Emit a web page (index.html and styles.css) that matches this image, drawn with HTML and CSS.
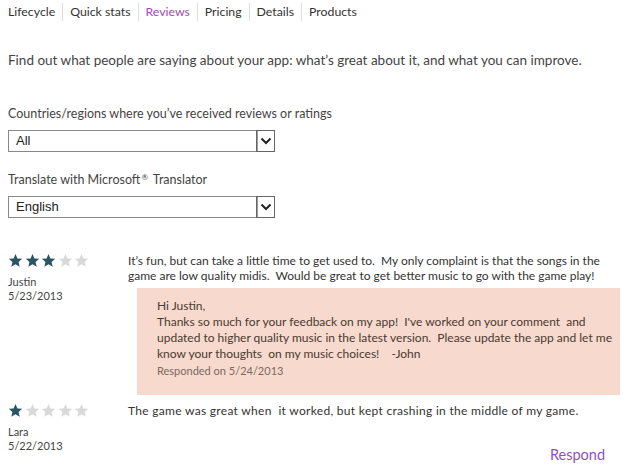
FILE: index.html
```html
<!DOCTYPE html>
<html>
<head>
<meta charset="utf-8">
<link rel="stylesheet" href="styles.css">
</head>
<body>
<nav class="tabs">
  <a class="tab">Lifecycle</a>
  <a class="tab">Quick stats</a>
  <a class="tab active">Reviews</a>
  <a class="tab">Pricing</a>
  <a class="tab">Details</a>
  <a class="tab">Products</a>
</nav>
<p class="intro">Find out what people are saying about your app: what’s great about it, and what you can improve.</p>

<div class="field first">
  <div class="label">Countries/regions where you’ve received reviews or ratings</div>
  <div class="select"><span class="value">All</span><span class="arrow"><svg width="12" height="8" viewBox="0 0 12 8"><path d="M1.5 1.5 L6 6 L10.5 1.5" fill="none" stroke="#222" stroke-width="2"/></svg></span></div>
</div>
<div class="field">
  <div class="label">Translate with Microsoft<sup>®</sup> Translator</div>
  <div class="select"><span class="value">English</span><span class="arrow"><svg width="12" height="8" viewBox="0 0 12 8"><path d="M1.5 1.5 L6 6 L10.5 1.5" fill="none" stroke="#222" stroke-width="2"/></svg></span></div>
</div>

<div class="review r1">
  <div class="meta">
    <div class="stars">
      <svg class="star on" viewBox="0 0 24 24"><path d="M12 1.5l3.1 7.2 7.6.6-5.8 5 1.8 7.5L12 17.8 5.3 21.8l1.8-7.5-5.8-5 7.6-.6z"/></svg>
      <svg class="star on" viewBox="0 0 24 24"><path d="M12 1.5l3.1 7.2 7.6.6-5.8 5 1.8 7.5L12 17.8 5.3 21.8l1.8-7.5-5.8-5 7.6-.6z"/></svg>
      <svg class="star on" viewBox="0 0 24 24"><path d="M12 1.5l3.1 7.2 7.6.6-5.8 5 1.8 7.5L12 17.8 5.3 21.8l1.8-7.5-5.8-5 7.6-.6z"/></svg>
      <svg class="star" viewBox="0 0 24 24"><path d="M12 1.5l3.1 7.2 7.6.6-5.8 5 1.8 7.5L12 17.8 5.3 21.8l1.8-7.5-5.8-5 7.6-.6z"/></svg>
      <svg class="star" viewBox="0 0 24 24"><path d="M12 1.5l3.1 7.2 7.6.6-5.8 5 1.8 7.5L12 17.8 5.3 21.8l1.8-7.5-5.8-5 7.6-.6z"/></svg>
    </div>
    <div class="who">Justin</div>
    <div class="when">5/23/2013</div>
  </div>
  <div class="body">
    <p class="text">It’s fun, but can take a little time to get used to.&nbsp; My only complaint is that the songs in the game are low quality midis.&nbsp; Would be great to get better music to go with the game play!</p>
    <div class="response">
      <p class="resp-text">Hi Justin,<br>Thanks so much for your feedback on my app!&nbsp; I've worked on your comment&nbsp; and updated to higher quality music in the latest version.&nbsp; Please update the app and let me know your thoughts&nbsp; on my music choices!&nbsp;&nbsp;&nbsp; -John</p>
      <p class="resp-date">Responded on 5/24/2013</p>
    </div>
  </div>
</div>

<div class="review r2">
  <div class="meta">
    <div class="stars">
      <svg class="star on" viewBox="0 0 24 24"><path d="M12 1.5l3.1 7.2 7.6.6-5.8 5 1.8 7.5L12 17.8 5.3 21.8l1.8-7.5-5.8-5 7.6-.6z"/></svg>
      <svg class="star" viewBox="0 0 24 24"><path d="M12 1.5l3.1 7.2 7.6.6-5.8 5 1.8 7.5L12 17.8 5.3 21.8l1.8-7.5-5.8-5 7.6-.6z"/></svg>
      <svg class="star" viewBox="0 0 24 24"><path d="M12 1.5l3.1 7.2 7.6.6-5.8 5 1.8 7.5L12 17.8 5.3 21.8l1.8-7.5-5.8-5 7.6-.6z"/></svg>
      <svg class="star" viewBox="0 0 24 24"><path d="M12 1.5l3.1 7.2 7.6.6-5.8 5 1.8 7.5L12 17.8 5.3 21.8l1.8-7.5-5.8-5 7.6-.6z"/></svg>
      <svg class="star" viewBox="0 0 24 24"><path d="M12 1.5l3.1 7.2 7.6.6-5.8 5 1.8 7.5L12 17.8 5.3 21.8l1.8-7.5-5.8-5 7.6-.6z"/></svg>
    </div>
    <div class="who">Lara</div>
    <div class="when">5/22/2013</div>
  </div>
  <div class="body">
    <p class="text wide">The game was great when&nbsp; it worked, but kept crashing in the middle of my game.</p>
    <div class="actions"><a class="respond">Respond</a></div>
  </div>
</div>
</body>
</html>
```

FILE: styles.css
```css
html, body {
  margin: 0;
  padding: 0;
  background: #fff;
}
body {
  padding: 0 8px;
  font-family: Lato, "Open Sans", sans-serif;
  color: #333;
  width: 613px;
}
p { margin: 0; }

.tabs {
  display: flex;
  align-items: center;
  height: 24px;
  font-size: 12.3px;
  color: #333;
}
.tab {
  padding: 0 7px;
  line-height: 18px;
  border-left: 1px solid #ddd;
}
.tab:first-child { padding-left: 0; border-left: none; }
.tab.active { color: #a04db0; }

.intro {
  margin-top: 27px;
  font-size: 13.5px;
  line-height: 18px;
  color: #444;
}

.field { margin-top: 17px; }
.field.first { margin-top: 37px; }
.label {
  font-size: 12.5px;
  line-height: 16px;
  color: #444;
}
.label sup { font-size: 8px; vertical-align: 4px; margin-left: 1px; margin-right: 2px; }
.select {
  margin-top: 8px;
  width: 265px;
  height: 20px;
  border: 1px solid #888;
  display: flex;
  align-items: stretch;
  font-family: "Liberation Sans", Arial, sans-serif;
  font-size: 13px;
  color: #222;
}
.select .value {
  flex: 1;
  padding-left: 7px;
  line-height: 20px;
}
.select .arrow {
  width: 16px;
  border-left: 1px solid #999;
  outline: 1px solid #666;
  display: flex;
  align-items: center;
  justify-content: center;
  background: #fff;
}

.review {
  display: flex;
  font-size: 12px;
  color: #333;
}
.r1 { margin-top: 34px; }
.r2 { margin-top: 7px; }
.meta { width: 120px; flex: none; }
.stars { display: flex; gap: 1.5px; height: 16px; align-items: center; }
.star { width: 15px; height: 15px; fill: #d9d9d9; }
.star.on { fill: #2b5466; }
.who, .when { font-size: 11px; line-height: 14px; color: #444; }
.who { margin-top: 7px; }
.body { flex: 1; }
.text { line-height: 15px; padding-top: 1px; }
.text.wide { letter-spacing: 0.3px; }
.response {
  margin: 5px 1px 0 9px;
  background: #f7d9ce;
  padding: 10px 4px 16px 20px;
  color: #4a3a30;
}
.resp-text { line-height: 16px; }
.resp-date { font-size: 11px; color: #7a6a60; margin-top: 1px; line-height: 16px; }
.actions { display: flex; justify-content: flex-end; margin-top: 28px; padding-right: 16px; }
.respond { font-size: 14.5px; color: #8b4fc6; }
```
